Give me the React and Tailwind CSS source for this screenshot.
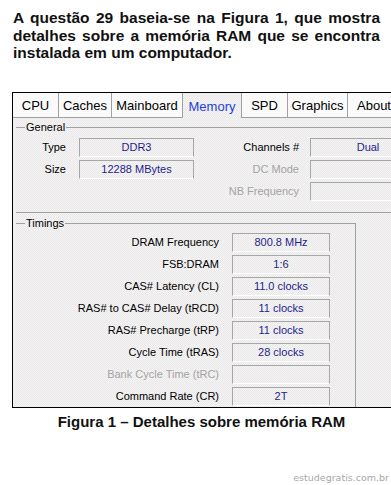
const TEX =
  "bg-[#f0efed] bg-[repeating-conic-gradient(#eae8ef_0%_25%,#f5f4ee_0%_50%)] bg-[length:2px_2px]";

const tabs = [
  { t: "CPU", w: "w-[45px]", first: true },
  { t: "Caches", w: "w-[53px]" },
  { t: "Mainboard", w: "w-[71px]" },
  { t: "Memory", w: "w-[59px]", active: true },
  { t: "SPD", w: "w-[46px]" },
  { t: "Graphics", w: "w-[60px]" },
  { t: "About", w: "w-[53px]" },
];

function Box({ className = "", children }) {
  return (
    <div
      className={`flex h-[19px] shrink-0 items-center justify-center border border-[#a6a6a6] border-b-white text-[#1e1e8c] ${TEX} ${className}`}
    >
      {children}
    </div>
  );
}

function GroupLabel({ children }) {
  return (
    <div className={`-mt-[7px] ml-[9px] w-fit px-[1px] leading-[13px] text-black ${TEX}`}>
      {children}
    </div>
  );
}

const timings = [
  ["DRAM Frequency", "800.8 MHz"],
  ["FSB:DRAM", "1:6"],
  ["CAS# Latency (CL)", "11.0 clocks"],
  ["RAS# to CAS# Delay (tRCD)", "11 clocks"],
  ["RAS# Precharge (tRP)", "11 clocks"],
  ["Cycle Time (tRAS)", "28 clocks"],
  ["Bank Cycle Time (tRC)", "", true],
  ["Command Rate (CR)", "2T"],
];

export default function App() {
  return (
    <div className="h-[485px] w-[391px] overflow-hidden bg-white font-['Liberation_Sans',Arial,sans-serif]">
      <p className="ml-[13px] w-[367px] pt-[9px] text-justify text-[15.5px] font-bold leading-[17.5px] text-[#111]">
        A questão 29 baseia-se na Figura 1, que mostra detalhes sobre a memória RAM que se encontra
        instalada em um computador.
      </p>

      <div className="ml-[12px] mt-[30px] w-[430px] border-y border-l border-black">
        {/* tabs */}
        <div className="flex h-[25px] text-[13px]">
          {tabs.map((tab) =>
            tab.active ? (
              <div
                key={tab.t}
                className={`flex h-[25px] shrink-0 items-center justify-center border-l border-[#a0a0a0] pt-[3px] text-[#1b3fdc] ${tab.w} ${TEX}`}
              >
                {tab.t}
              </div>
            ) : (
              <div
                key={tab.t}
                className={`flex h-[25px] shrink-0 items-center justify-center border-b border-[#a0a0a0] bg-[#fafafa] pt-[3px] text-black ${tab.w} ${
                  tab.first ? "" : "border-l"
                }`}
              >
                {tab.t}
              </div>
            )
          )}
          <div className="h-[25px] flex-1 border-b border-[#a0a0a0] bg-[#fafafa]" />
        </div>

        {/* panel */}
        <div className={`h-[289px] overflow-hidden pl-[3px] text-[11px] ${TEX}`}>
          {/* General */}
          <div className="mt-[9px] border-y border-[#a0a0a0] pb-[11px]">
            <GroupLabel>General</GroupLabel>
            <div className="mt-[4px] flex flex-col gap-[3px]">
              <div className="flex h-[19px] items-center">
                <div className="w-[50px] shrink-0 text-right text-black">Type</div>
                <Box className="ml-[13px] w-[115px]">DDR3</Box>
                <div className="w-[105px] shrink-0 text-right text-black">Channels #</div>
                <Box className="ml-[11px] w-[116px]">Dual</Box>
              </div>
              <div className="flex h-[19px] items-center">
                <div className="w-[50px] shrink-0 text-right text-black">Size</div>
                <Box className="ml-[13px] w-[115px]">12288 MBytes</Box>
                <div className="w-[105px] shrink-0 text-right text-[#a4a4a4]">DC Mode</div>
                <Box className="ml-[11px] w-[116px]" />
              </div>
              <div className="flex h-[19px] items-center">
                <div className="w-[50px] shrink-0" />
                <div className="ml-[13px] w-[115px] shrink-0" />
                <div className="w-[105px] shrink-0 text-right text-[#a4a4a4]">NB Frequency</div>
                <Box className="ml-[11px] w-[116px]" />
              </div>
            </div>
          </div>

          {/* Timings */}
          <div className="mt-[10px] w-[340px] border-r border-t border-[#a0a0a0] pb-[10px]">
            <GroupLabel>Timings</GroupLabel>
            <div className="mt-[3px] flex flex-col gap-[3px]">
              {timings.map(([label, value, grey]) => (
                <div key={label} className="flex h-[19px] items-center">
                  <div
                    className={`w-[203px] shrink-0 text-right ${grey ? "text-[#a4a4a4]" : "text-black"}`}
                  >
                    {label}
                  </div>
                  <Box className="ml-[13px] w-[98px]">{value}</Box>
                </div>
              ))}
            </div>
          </div>
        </div>
      </div>

      <div className="mt-[5px] flex justify-center pl-[12px] text-[15px] font-bold leading-[18px] text-[#111]">
        Figura 1 – Detalhes sobre memória RAM
      </div>

      <div className="mt-[41px] pr-[2px] text-right font-['DejaVu_Sans',sans-serif] text-[9.5px] leading-[12px] text-[#a8a8a8]">
        estudegratis.com.br
      </div>
    </div>
  );
}
